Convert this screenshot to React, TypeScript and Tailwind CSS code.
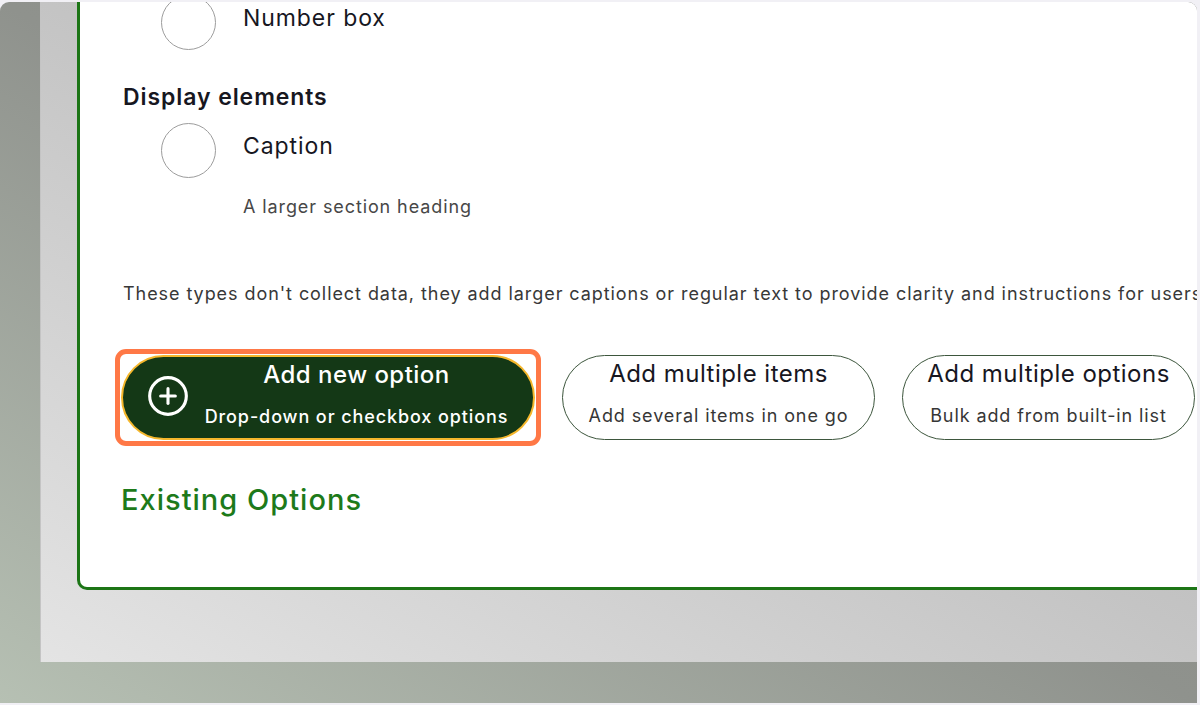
import { PlusCircle } from "lucide-react";

const font = { fontFamily: "Inter, 'Noto Sans', sans-serif" };

function RadioRow({ label, hint }: { label: string; hint?: string }) {
  return (
    <div className="flex items-start">
      <div className="ml-[38px] h-[55px] w-[55px] shrink-0 rounded-full border border-[#9c9c9c] bg-white" />
      <div className="ml-[27px]">
        <div className="flex h-[55px] items-center pb-[8px] text-[23px] tracking-[0.04em] text-[#17171f]">{label}</div>
        {hint && (
          <div className="mt-[16px] text-[18px] leading-[26px] tracking-[0.05em] text-[#474747]">{hint}</div>
        )}
      </div>
    </div>
  );
}

function OutlineButton({ title, sub, width }: { title: string; sub: string; width: string }) {
  return (
    <button
      className={`${width} flex h-[85px] shrink-0 flex-col items-center rounded-full border-[1.5px] border-[#3d563d] bg-white pt-[4px]`}
    >
      <span className="text-[24px] leading-[28px] tracking-[0.02em] text-[#17171f]">{title}</span>
      <span className="mt-[16px] text-[18px] leading-[24px] tracking-[0.05em] text-[#363636]">{sub}</span>
    </button>
  );
}

export default function App() {
  return (
    <div style={font} className="h-[705px] w-[1200px] overflow-hidden bg-[#f1f0f5] pt-[2px] pr-[3px] pb-[2px]">
      {/* captured screen with its backdrop */}
      <div className="h-full w-full overflow-hidden rounded-t-[9px] bg-gradient-to-tr from-[#b6c0b3] via-[#8f928d] to-[#858783]">
        <div className="ml-[40px] h-[660px] w-[1200px] border-l border-[#c4c4c4] bg-gradient-to-tr from-[#e4e4e4] via-[#c4c4c4] to-[#aaaaaa] pl-[36px] pb-[72px]">
          <div className="relative flow-root h-full w-full rounded-bl-[10px] border-b-[3px] border-l-[3px] border-[#1c7516] bg-white pl-[43px]">
            <div className="-mt-[7px]">
              <RadioRow label="Number box" />
            </div>

            <div className="mt-[32px] text-[23px] font-semibold leading-[30px] tracking-[0.04em] text-[#17171f]">
              Display elements
            </div>

            <div className="mt-[11px]">
              <RadioRow label="Caption" hint="A larger section heading" />
            </div>

            <p className="mt-[61px] whitespace-nowrap text-[18px] leading-[26px] tracking-[0.052em] text-[#383838]">
              These types don't collect data, they add larger captions or regular text to provide clarity and instructions for users
            </p>

            <div className="-ml-[2px] mt-[48px] flex items-center gap-[27px]">
              <div className="relative">
                <div className="absolute -inset-[6px] rounded-[11px] border-[5px] border-[#ff7846]" />
                <button className="flex h-[85px] w-[414px] items-start rounded-full border-[2.5px] border-[#f5b72c] bg-[#143816] pl-[23px] text-white">
                  <PlusCircle size={44} strokeWidth={1.7} className="mt-[17px] shrink-0" />
                  <span className="flex flex-1 flex-col items-center pr-[10px] pt-[3.5px]">
                    <span className="text-[24px] font-medium leading-[28px] tracking-[0.02em]">Add new option</span>
                    <span className="mt-[16px] text-[18px] font-medium leading-[24px] tracking-[0.05em]">
                      Drop-down or checkbox options
                    </span>
                  </span>
                </button>
              </div>
              <OutlineButton title="Add multiple items" sub="Add several items in one go" width="w-[313px]" />
              <OutlineButton title="Add multiple options" sub="Bulk add from built-in list" width="w-[293px]" />
            </div>

            <h2 className="-ml-[2px] mt-[40px] text-[29px] font-medium leading-[40px] tracking-[0.035em] text-[#1d7a1a]">
              Existing Options
            </h2>
          </div>
        </div>
      </div>
    </div>
  );
}
